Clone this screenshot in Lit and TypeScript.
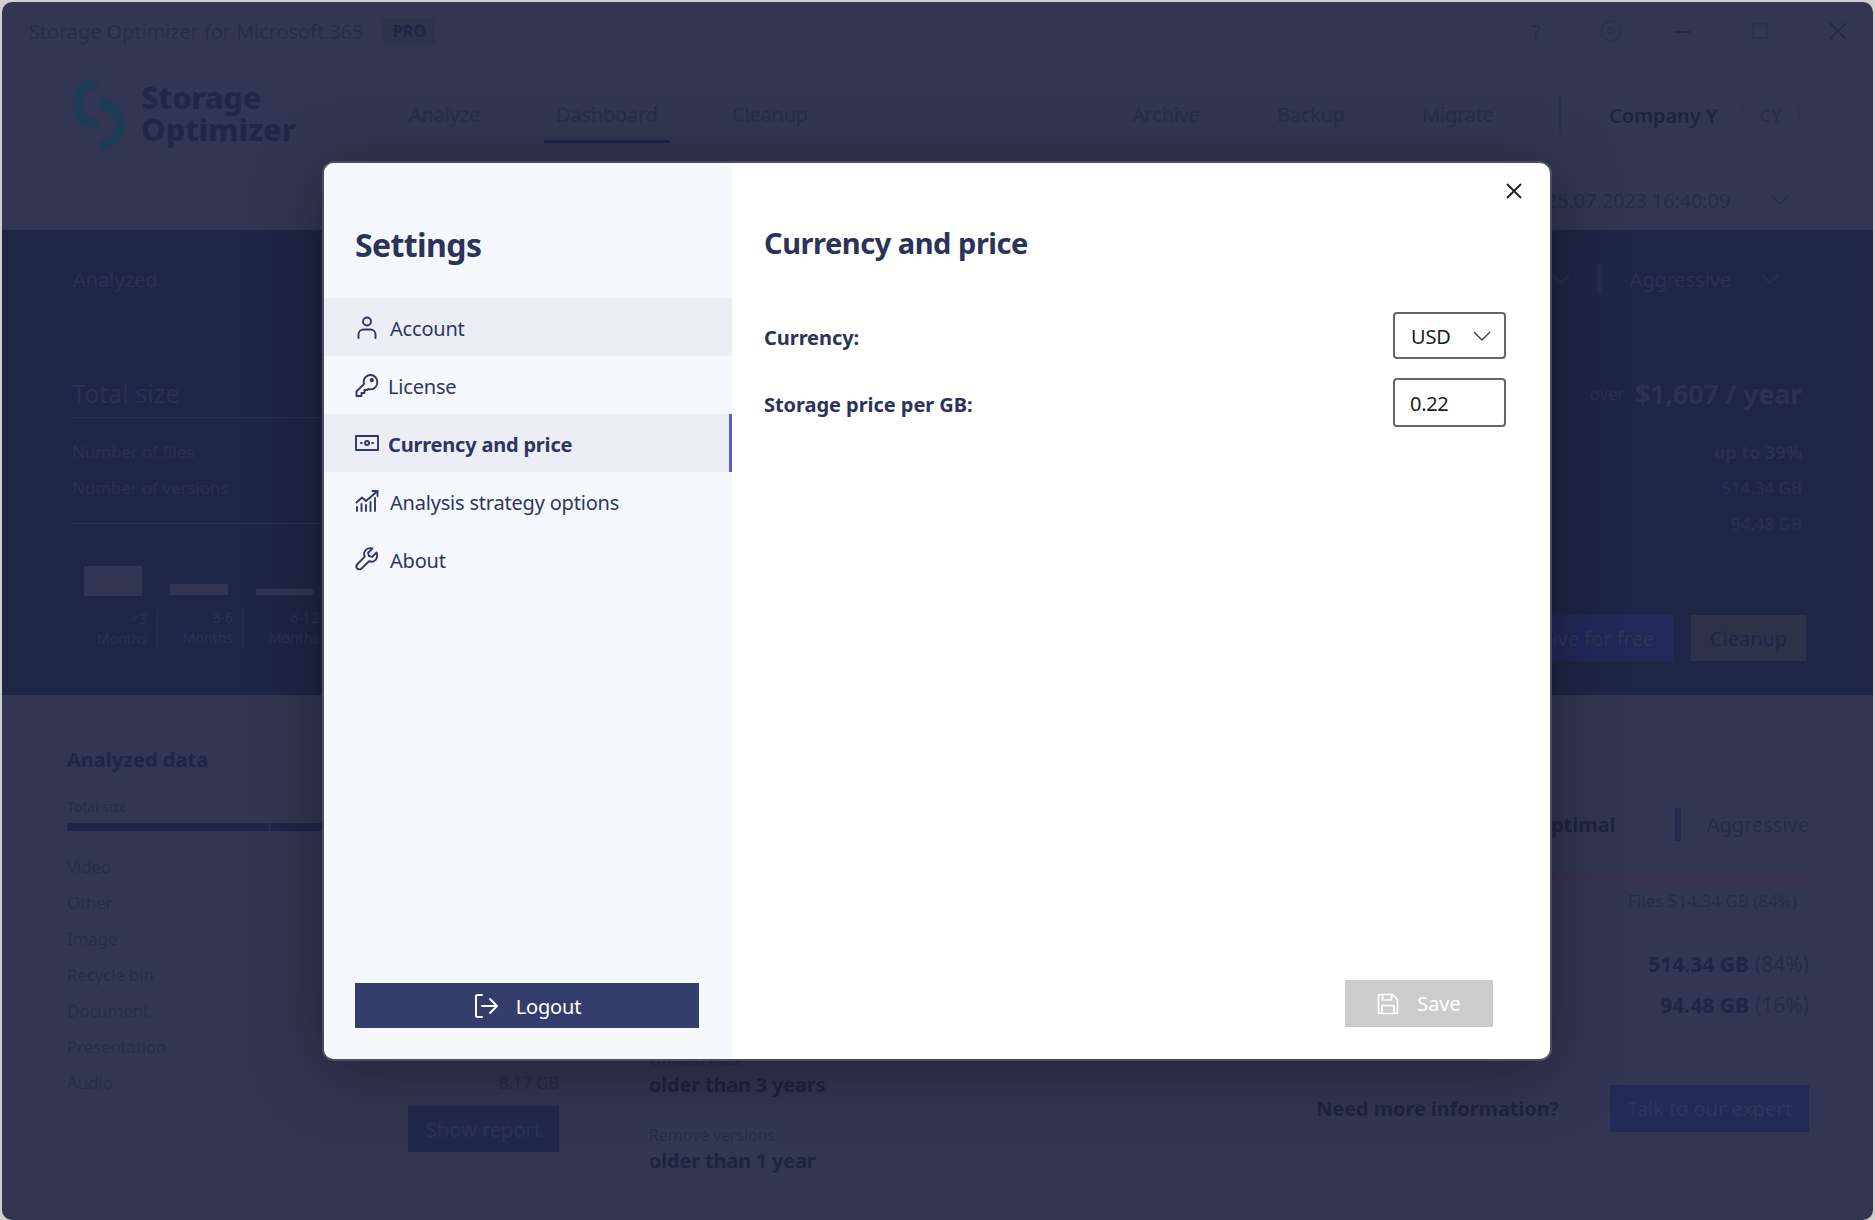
import { LitElement, html, css, svg } from "lit";
import { customElement } from "lit/decorators.js";

const chevron = (cls = "chev") => html`<svg class=${cls} viewBox="0 0 18 10" fill="none" stroke="currentColor" stroke-width="1.4"><path d="M1 1l8 8 8-8"/></svg>`;

const icons: Record<string, unknown> = {
  account: svg`<circle cx="12" cy="6.5" r="4" /><path d="M3.5 23v-3.5c0-3 2.300-5 5-5h7c2.700 0 5 2 5 5V23"/>`,
  key: svg`<path d="M15.500 2c-3.800 0-6.800 3-6.800 6.700 0 .8.100 1.500.4 2.200L1.500 18.500V23h5v-3h3v-3h2.600l1-1c.8.300 1.600.4 2.400.4 3.700 0 6.800-3 6.800-7.200C22.300 5 19.300 2 15.500 2z"/><circle cx="16.800" cy="7.200" r="1.200"/>`,
  money: svg`<rect x="1" y="5" width="22" height="14" /><circle cx="12" cy="12" r="2" /><path d="M6 12h.8M17.200 12h.8" />`,
  chart: svg`<path d="M2 22v-4M6.500 22v-7M11 22v-6M15.500 22V13M20 22V9"/><path d="M1.500 13.500L7 8.500l4 3.500L22.500 2"/><path d="M17.500 2h5v5" />`,
  wrench: svg`<path d="M21.500 5.500l-4.300 4.300-3.300-.8-.8-3.300 4.300-4.200c-3-.9-6.400.3-7.700 3.100-.8 1.700-.7 3.500 0 5L2.500 17c-1.400 1.400-1.400 3.300-.2 4.500 1.200 1.200 3.200 1.200 4.500-.1l7.300-7.200c1.600.7 3.500.7 5.100-.2 2.700-1.400 3.700-5.300 2.300-8.500z"/>`,
};

const menu = [
  { label: "Account", icon: "account", cls: "hover" },
  { label: "License", icon: "key", cls: "tight" },
  { label: "Currency and price", icon: "money", cls: "active tight" },
  { label: "Analysis strategy options", icon: "chart", cls: "" },
  { label: "About", icon: "wrench", cls: "" },
];

const tabs = [
  { label: "Analyze", w: 147, on: false },
  { label: "Dashboard", w: 176, on: true },
  { label: "Cleanup", w: 400, on: false },
  { label: "Archive", w: 145, on: false },
  { label: "Backup", w: 145, on: false },
  { label: "Migrate", w: 149, on: false },
];

const kinds = ["Video", "Other", "Image", "Recycle bin", "Document", "Presentation", "Audio"];
const ages = [
  { a: "<3", h: 30 },
  { a: "3-6", h: 11 },
  { a: "6-12", h: 6 },
];

@customElement("app-root")
export class AppRoot extends LitElement {
  static styles = css`
    :host { display: block; position: relative; width: 1875px; height: 1220px; background: #cfcfcf; overflow: hidden;
      font-family: "Noto Sans", "Open Sans", sans-serif; font-size: 18px; color: #262b4a; }
    * { box-sizing: border-box; }
    .window { margin: 2px 2px 0 2px; height: 1218px; background: #323652; border-radius: 10px; overflow: hidden; display: flex; flex-direction: column; }

    .head { height: 228px; flex: none; display: flex; flex-direction: column; }
    .titlebar { height: 58px; display: flex; align-items: center; padding-left: 27px; }
    .app-name { font-size: 20px; letter-spacing: -.08px; color: #272c4b; }
    .pro { margin-left: 20px; width: 52px; height: 27px; display: flex; align-items: center; justify-content: center; background: #2e3349; font-weight: 700; font-size: 16px; color: #1f2547; }
    .controls { margin-left: auto; display: flex; align-items: center; color: #272c4b; }
    .q { width: 24px; text-align: center; font-size: 20px; margin-right: 51px; }
    .ctl { width: 24px; height: 24px; fill: none; }
    .ctl-gear { margin-right: 50px; stroke: #2c3050; }
    .ctl-min { margin-right: 61px; width: 18px; stroke: #1f2547; }
    .ctl-max { margin-right: 61px; width: 16px; stroke: #2a2f4f; }
    .ctl-x { margin-right: 26px; width: 18px; stroke: #232847; }

    .brandrow { height: 110px; display: flex; align-items: center; padding-left: 71px; }
    .logo { width: 52px; height: 74px; margin-right: 16px; flex: none; }
    .brand { width: 256px; margin-top: -4px; font-weight: 800; font-size: 31px; line-height: 32px; color: #22274a; letter-spacing: -.2px; }
    .tab { flex: none; font-size: 20px; color: #272c4b; letter-spacing: -.2px; }
    .tab span { display: inline-block; padding: 14px 12px 12px; border-bottom: 3px solid transparent; }
    .tab.on span { border-bottom-color: #1d2550; }
    .vsep { width: 2px; height: 38px; background: #2d3150; flex: none; margin-right: 48px; }
    .company { width: 132px; flex: none; font-size: 20px; font-weight: 600; color: #1f2342; letter-spacing: -.1px; }
    .avatar { width: 59px; height: 59px; flex: none; border-radius: 50%; border: 1px solid #30344f; display: flex; align-items: center; justify-content: center; font-weight: 700; font-size: 18px; color: #2a2e4c; }

    .daterow { height: 60px; display: flex; align-items: center; justify-content: flex-end; padding-right: 84px; color: #262b4a; }
    .date { font-size: 20px; letter-spacing: -.15px; margin-right: 41px; }
    .chev { width: 18px; height: 10px; flex: none; color: #272c4b; }

    .band { height: 465px; flex: none; background: #1f2545; display: flex; justify-content: space-between; color: #2c3050; }
    .band-l { width: 700px; padding-left: 70px; }
    .band-r { width: 520px; padding-right: 67px; display: flex; flex-direction: column; }
    .strat { height: 98px; display: flex; align-items: center; justify-content: flex-end; padding-right: 27px; font-size: 20px; }
    .strat .chev { color: #2c3050; }
    .bar-sep { width: 5px; height: 30px; background: #252b4c; margin: 0 28px 0 27px; }
    .strat .lbl { margin-right: 30px; letter-spacing: -.1px; }
    .a-lbl { height: 98px; display: flex; align-items: center; padding-left: 1px; font-size: 20px; }
    .total { margin-top: 40px; height: 50px; display: flex; align-items: center; font-size: 25px; border-bottom: 1px solid #2a2e4e; }
    .rows { height: 106px; border-bottom: 1px solid #2a2e4e; padding-top: 16px; font-size: 17px; line-height: 36px; letter-spacing: -.1px; }
    .chart { display: flex; margin-top: 42px; }
    .age { width: 86px; height: 82px; display: flex; flex-direction: column; }
    .barwrap { height: 30px; display: flex; align-items: flex-end; padding-left: 12px; }
    .barwrap i { display: block; width: 58px; background: #323652; }
    .age-t { margin-top: 13px; height: 40px; text-align: right; padding-right: 10px; border-right: 1px solid #292d4d; font-size: 14px; line-height: 20px; color: #2d3151; }

    .sum { margin-top: 40px; height: 50px; padding-right: 4px; display: flex; align-items: center; justify-content: flex-end; }
    .sum small { font-size: 17px; margin-right: 10px; }
    .sum b { font-size: 27px; color: #2e3250; letter-spacing: -.2px; }
    .vals { padding: 16px 4px 0 0; text-align: right; font-size: 17px; line-height: 36px; }
    .vals b { display: block; font-size: 18px; }
    .btns { margin-top: 73px; display: flex; justify-content: flex-end; gap: 18px; }
    .btn { height: 46px; display: flex; align-items: center; justify-content: center; font-size: 20px; }
    .b-free { width: 280px; background: #22285a; justify-content: flex-end; padding-right: 19px; color: #2f3458; }
    .b-clean { width: 115px; background: #2e3248; color: #1f2547; }

    .lower { flex: 1; display: flex; }
    .c1 { width: 557px; padding: 51px 0 0 65px; flex: none; }
    .h3 { height: 28px; line-height: 28px; font-size: 20px; font-weight: 700; color: #1f2547; }
    .ts { margin-top: 23px; height: 20px; line-height: 20px; font-size: 14px; color: #272c4b; }
    .tsbar { margin-top: 6px; height: 8px; display: flex; gap: 1px; }
    .tsbar i { display: block; height: 8px; background: #1f2547; }
    .kinds { margin-top: 17px; }
    .kind { height: 36px; display: flex; justify-content: space-between; align-items: center; font-size: 17px; letter-spacing: -.2px; color: #272c4b; }
    .show { margin: 6px 0 0 auto; width: 151px; height: 46px; background: #222849; color: #2e3355; font-size: 20px; display: flex; align-items: center; justify-content: center; }
    .c2 { width: 400px; flex: none; padding: 353px 0 0 90px; color: #272c4b; }
    .c2 .s { height: 22px; line-height: 22px; font-size: 16px; letter-spacing: -.1px; }
    .c2 .o { height: 30px; line-height: 30px; font-size: 20px; font-weight: 700; color: #1f2342; letter-spacing: -.2px; }
    .c2 .gap { margin-top: 24px; }
    .c3 { flex: 1; padding: 112px 64px 0 0; display: flex; flex-direction: column; align-items: stretch; color: #262b4a; }
    .modes { display: flex; align-items: center; justify-content: flex-end; height: 34px; font-size: 20px; }
    .modes b { color: #1f2342; font-weight: 700; margin-right: 59px; }
    .modes .bar-sep2 { width: 6px; height: 33px; background: #242a4c; margin-right: 26px; }
    .pink { margin-top: 33px; height: 8px; background: #393250; }
    .files { margin-top: 8px; padding-right: 12px; text-align: right; font-size: 17px; line-height: 22px; }
    .sz { text-align: right; font-size: 21px; line-height: 26px; }
    .sz b { color: #1f2547; margin-right: 6px; }
    .sz.a { margin-top: 39px; }
    .sz.b { margin-top: 15px; }
    .more { margin-top: 67px; display: flex; align-items: center; justify-content: flex-end; gap: 51px; }
    .more b { font-size: 20px; color: #1f2342; letter-spacing: -.1px; }
    .talk { width: 199px; height: 47px; background: #232a58; color: #2f3555; font-size: 20px; display: flex; align-items: center; justify-content: center; }

    /* dialog over the page */
    .dialog { position: absolute; left: 322px; top: 161px; width: 1230px; height: 900px; display: flex; border: 2px solid #4a4e63; border-radius: 12px; background: #fff; overflow: hidden; }
    .shadow { position: absolute; left: 322px; top: 161px; width: 1230px; height: 900px; border-radius: 12px; box-shadow: 0 10px 70px rgba(0,0,0,.38); }
    .side { width: 408px; flex: none; background: #f5f8fd; display: flex; flex-direction: column; color: #2e3660; }
    .side h2 { margin: 59px 0 30px 31px; height: 46px; line-height: 46px; font-size: 32px; font-weight: 700; color: #2b3359; letter-spacing: -.6px; }
    .item { height: 58px; display: flex; align-items: center; padding-left: 31px; font-size: 20px; letter-spacing: -.2px; }
    .item span { padding-top: 2px; }
    .item svg { width: 24px; height: 24px; flex: none; margin-right: 11px; fill: none; stroke: #2e3868; stroke-width: 1.9; stroke-linecap: round; stroke-linejoin: round; }
    .item.tight svg { margin-right: 9px; }
    .item.hover { background: #ebeef5; }
    .item.active { background: #ebeef5; font-weight: 700; border-right: 3px solid #5f5bd6; }
    .logout { margin: auto 0 31px 31px; width: 344px; height: 45px; background: #343e6d; color: #fff; display: flex; align-items: center; justify-content: center; font-size: 20px; gap: 17px; letter-spacing: -.2px; }
    .logout span { padding-top: 2px; }
    .logout svg { width: 26px; height: 26px; fill: none; stroke: #fff; stroke-width: 2; stroke-linecap: round; stroke-linejoin: round; }
    .main { flex: 1; padding: 60px 44px 32px 32px; display: flex; flex-direction: column; position: relative; color: #2b3359; }
    .main h1 { margin: 0 0 49px; height: 40px; line-height: 40px; font-size: 29px; font-weight: 700; letter-spacing: -.47px; }
    .field { display: flex; align-items: center; justify-content: space-between; margin-bottom: 19px; }
    .field label { font-size: 20px; font-weight: 700; letter-spacing: -.05px; padding-top: 3px; }
    .select, .input { width: 113px; border: 2px solid #666; border-radius: 4px; display: flex; align-items: center; font-size: 20px; color: #1c1c1c; background: #fff; }
    .select { height: 47px; padding: 1px 13px 0 16px; justify-content: space-between; letter-spacing: -.2px; }
    .select .chev { color: #444; }
    .input { height: 49px; padding: 2px 0 0 15px; letter-spacing: -.3px; }
    .close { position: absolute; top: 20px; right: 28px; width: 16px; height: 16px; stroke: #1a1a1a; stroke-width: 1.8; fill: none; }
    .save { margin: auto 13px 0 auto; width: 148px; height: 47px; background: #ccc; color: #fff; display: flex; align-items: center; justify-content: center; gap: 18px; font-size: 20px; }
    .save svg { width: 22px; height: 22px; fill: none; stroke: #fff; stroke-width: 1.7; stroke-linejoin: round; }
  `;

  render() {
    return html`
      <div class="window">
        <div class="head">
          <div class="titlebar">
            <span class="app-name">Storage Optimizer for Microsoft 365</span>
            <span class="pro">PRO</span>
            <div class="controls">
              <span class="q">?</span>
              <svg class="ctl ctl-gear" viewBox="0 0 24 24" stroke-width="1.2"><circle cx="12" cy="12" r="3.2"/><path d="M20.500 12A4.600 4.600 0 0 1 16.250 19.360A4.600 4.600 0 0 1 7.750 19.360A4.600 4.600 0 0 1 3.500 12A4.600 4.600 0 0 1 7.750 4.640A4.600 4.600 0 0 1 16.250 4.640A4.600 4.600 0 0 1 20.500 12Z"/></svg>
              <svg class="ctl ctl-min" viewBox="0 0 18 24" stroke-width="1.4"><path d="M1 13h16"/></svg>
              <svg class="ctl ctl-max" viewBox="0 0 16 24" stroke-width="1.4"><rect x="1" y="5" width="14" height="14"/></svg>
              <svg class="ctl ctl-x" viewBox="0 0 18 24" stroke-width="1.6"><path d="M1 4l16 16M17 4L1 20"/></svg>
            </div>
          </div>
          <div class="brandrow">
            <svg class="logo" viewBox="0 0 52 74" fill="none" stroke="#1d3c55" stroke-width="10"><path d="M24.300 5.200A20.500 20.500 0 0 0 24.300 46.200"/><path d="M26.300 26.200A20.500 20.500 0 0 1 26.300 67.200"/></svg>
            <div class="brand">Storage<br />Optimizer</div>
            ${tabs.map((t) => html`<div class="tab ${t.on ? "on" : ""}" style="width:${t.w}px"><span>${t.label}</span></div>`)}
            <div class="vsep"></div>
            <div class="company">Company Y</div>
            <div class="avatar">CY</div>
          </div>
          <div class="daterow"><span class="date">25.07.2023 16:40:09</span>${chevron()}</div>
        </div>

        <div class="band">
          <div class="band-l">
            <div class="a-lbl">Analyzed</div>
            <div class="total">Total size</div>
            <div class="rows"><div>Number of files</div><div>Number of versions</div></div>
            <div class="chart">
              ${ages.map((g) => html`<div class="age">
                <div class="barwrap"><i style="height:${g.h}px"></i></div>
                <div class="age-t">${g.a}<br />Months</div>
              </div>`)}
            </div>
          </div>
          <div class="band-r">
            <div class="strat">${chevron()}<span class="bar-sep"></span><span class="lbl">Aggressive</span>${chevron()}</div>
            <div class="sum"><small>over</small><b>$1,607 / year</b></div>
            <div class="vals"><b>up to 39%</b><div>514.34 GB</div><div>94.48 GB</div></div>
            <div class="btns"><div class="btn b-free">Archive for free</div><div class="btn b-clean">Cleanup</div></div>
          </div>
        </div>

        <div class="lower">
          <div class="c1">
            <div class="h3">Analyzed data</div>
            <div class="ts">Total size</div>
            <div class="tsbar"><i style="width:202px"></i><i style="flex:1"></i></div>
            <div class="kinds">
              ${kinds.map((k) => html`<div class="kind"><span>${k}</span>${k === "Audio" ? html`<span>8.17 GB</span>` : ""}</div>`)}
            </div>
            <div class="show">Show report</div>
          </div>
          <div class="c2">
            <div class="s">Offload files</div>
            <div class="o">older than 3 years</div>
            <div class="s gap">Remove versions</div>
            <div class="o">older than 1 year</div>
          </div>
          <div class="c3">
            <div class="modes"><b>Optimal</b><span class="bar-sep2"></span><span>Aggressive</span></div>
            <div class="pink"></div>
            <div class="files">Files 514.34 GB (84%)</div>
            <div class="sz a"><b>514.34 GB</b>(84%)</div>
            <div class="sz b"><b>94.48 GB</b>(16%)</div>
            <div class="more"><b>Need more information?</b><div class="talk">Talk to our expert</div></div>
          </div>
        </div>
      </div>

      <div class="shadow"></div>
      <div class="dialog">
        <div class="side">
          <h2>Settings</h2>
          ${menu.map((m) => html`<div class="item ${m.cls}"><svg viewBox="0 0 24 24">${icons[m.icon]}</svg><span>${m.label}</span></div>`)}
          <div class="logout">
            <svg viewBox="0 0 26 26"><path d="M9 2H4.500C3.500 2 3 2.600 3 3.500v19c0 .9.500 1.500 1.500 1.500H9"/><path d="M9 13h15M17 6l7 7-7 7"/></svg>
            <span>Logout</span>
          </div>
        </div>
        <div class="main">
          <svg class="close" viewBox="0 0 16 16"><path d="M1 1l14 14M15 1L1 15"/></svg>
          <h1>Currency and price</h1>
          <div class="field"><label>Currency:</label><div class="select"><span>USD</span>${chevron()}</div></div>
          <div class="field"><label>Storage price per GB:</label><div class="input">0.22</div></div>
          <div class="save">
            <svg viewBox="0 0 22 22"><path d="M1.500 3c0-.9.600-1.500 1.500-1.500h12.500l5 5V19c0 .9-.6 1.500-1.500 1.500H3c-.9 0-1.500-.6-1.500-1.500z"/><path d="M5.500 1.500V7h9V1.500M5 20.500V12.500h12v8"/></svg>
            <span>Save</span>
          </div>
        </div>
      </div>
    `;
  }
}
